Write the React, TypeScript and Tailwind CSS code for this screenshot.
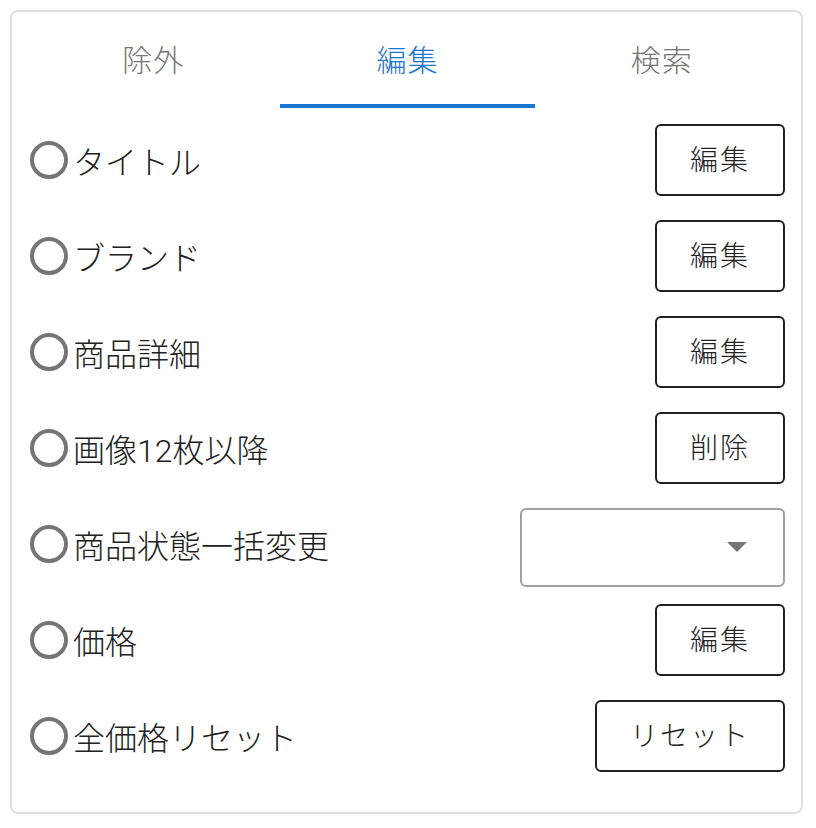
import React from "react";

const font = { fontFamily: 'Roboto, "Noto Sans CJK JP", sans-serif' };

type Row = { label: string; kind: "button" | "select"; action?: string; wide?: boolean };

const rows: Row[] = [
  { label: "タイトル", kind: "button", action: "編集" },
  { label: "ブランド", kind: "button", action: "編集" },
  { label: "商品詳細", kind: "button", action: "編集" },
  { label: "画像12枚以降", kind: "button", action: "削除" },
  { label: "商品状態一括変更", kind: "select" },
  { label: "価格", kind: "button", action: "編集" },
  { label: "全価格リセット", kind: "button", action: "リセット", wide: true },
];

const tabs = ["除外", "編集", "検索"];

const Radio = () => (
  <span className="block w-[38px] h-[38px] shrink-0 rounded-full border-[4px] border-[#757575]" />
);

const App = () => {
  return (
    <div className="bg-white w-[816px] h-[828px] p-[10px]" style={font}>
      <div className="border-2 border-[#e0e0e0] rounded-[8px] w-[793px] h-[804px] pb-[24px] font-light">
        <div className="flex pl-[14px] pr-[12px] h-[96px]">
          {tabs.map((t, i) => (
            <div
              key={t}
              className={
                i === 1
                  ? "flex-1 flex items-center justify-center text-[30px] tracking-[1px] text-[#1976d2] border-b-4 border-[#1976d2] pt-[4px]"
                  : "flex-1 flex items-center justify-center text-[30px] tracking-[1px] text-[#757575] border-b-4 border-transparent pt-[4px]"
              }
            >
              {t}
            </div>
          ))}
        </div>
        <div className="flex flex-col mt-[4px] pl-[18px] pr-[16px]">
          {rows.map((r) => (
            <div key={r.label} className="flex items-center justify-between h-[96px]">
              <div className="flex items-center gap-[5px]">
                <Radio />
                <span className="text-[32px] text-[#212121] leading-none mt-[6px]">{r.label}</span>
              </div>
              {r.kind === "button" ? (
                <button
                  className={
                    r.wide
                      ? "w-[190px] h-[72px] border-2 border-[#212121] rounded-[6px] text-[28px] text-[#212121] tracking-[2px] bg-white pt-[2px]"
                      : "w-[130px] h-[72px] border-2 border-[#212121] rounded-[6px] text-[28px] text-[#212121] tracking-[2px] bg-white pt-[2px]"
                  }
                >
                  {r.action}
                </button>
              ) : (
                <div className="w-[265px] h-[79px] mt-[6px] border-2 border-[#a0a0a0] rounded-[6px] flex items-center justify-end pr-[36px]">
                  <svg width="20" height="10" viewBox="0 0 20 10">
                    <path d="M0 0 L20 0 L10 10 Z" fill="#757575" />
                  </svg>
                </div>
              )}
            </div>
          ))}
        </div>
      </div>
    </div>
  );
};

export default App;
